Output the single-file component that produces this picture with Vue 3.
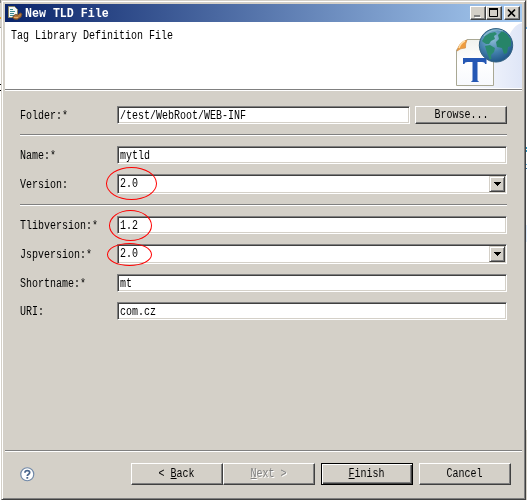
<script setup>
const groups = [
  [{ label: 'Folder:*', value: '/test/WebRoot/WEB-INF', browse: true }],
  [{ label: 'Name:*', value: 'mytld' }, { label: 'Version:', value: '2.0', combo: true, mark: 'm1' }],
  [
    { label: 'Tlibversion:*', value: '1.2', mark: 'm2' },
    { label: 'Jspversion:*', value: '2.0', combo: true, mark: 'm3' },
    { label: 'Shortname:*', value: 'mt' },
    { label: 'URI:', value: 'com.cz' },
  ],
]
</script>

<template>
  <div class="screen">
    <main class="window">
      <header class="title">
        <svg class="ticon" width="16" height="16" viewBox="0 0 16 16">
          <path d="M.5 1.500h6l3 3v8h-9z" fill="#f4f7f7" stroke="#8d8864" />
          <path d="M2 4.500h3M2 6.500h5M2 8.500h4M2 10.500h4" stroke="#3b8a90" />
          <path d="M4.500 12q3-4 5-2l3-2 1.500 1-1 3-4 2.500-3-.5z" fill="#b87639" stroke="#6a4a2f" />
          <path d="M6 12.500h4" stroke="#e3ad68" />
        </svg>
        <span class="t heading">New TLD File</span>
        <span class="controls">
          <span class="cbtn"><svg width="14" height="12"><path d="M4 9h6" stroke="#808080" stroke-width="2" /><path d="M5 10.500h6" stroke="#fff" /></svg></span>
          <span class="cbtn"><svg width="14" height="12"><path d="M3.500 2v7.500h8V2" fill="none" stroke="#000" /><path d="M3 2h9" stroke="#000" stroke-width="2" /></svg></span>
          <span class="cbtn close"><svg width="14" height="12"><path d="M4 2.500l7 7m0-7l-7 7" stroke="#000" stroke-width="1.700" /></svg></span>
        </span>
      </header>
      <section class="banner">
        <span class="t">Tag Library Definition File</span>
        <svg class="art" width="75" height="66" viewBox="0 0 75 66">
          <defs>
            <linearGradient id="wash" x1="0" y1="0" x2="1" y2="0"><stop stop-color="#fff" /><stop offset="1" stop-color="#dfe6f7" /></linearGradient>
            <linearGradient id="paper" x1="0" y1="0" x2="0" y2="1"><stop stop-color="#f1f2ee" /><stop offset=".5" stop-color="#fff" /><stop offset="1" stop-color="#f7f9fd" /></linearGradient>
            <radialGradient id="sea" cx=".4" cy=".3" r=".7"><stop stop-color="#91bfd8" /><stop offset=".6" stop-color="#427fac" /><stop offset="1" stop-color="#225889" /></radialGradient>
          </defs>
          <path d="M75 1C58 5 62 32 40 45L8 66h67z" fill="url(#wash)" />
          <path d="M9.500 28L20 17.500h26.500v46h-37z" fill="url(#paper)" stroke="#a9a894" />
          <path d="M10 29q2-9 10-11q-2 4-1.500 8q-5 0-8.500 3z" fill="#ef9c3e" stroke="#d08c45" stroke-width=".7" />
          <path d="M12 26q1.500-5 6-7" fill="none" stroke="#ffdca5" stroke-width="1.500" />
          <path d="M16 36h23.500v6h-1.500q0-2-3-2h-4.500v18q0 1.500 1.500 1.500v.5h-8v-.5q1.500 0 1.500-1.500V40H20.500q-3 0-3 2H16z" fill="#2457b4" />
          <circle cx="49" cy="23.300" r="16.700" fill="url(#sea)" stroke="#315f80" />
          <path d="M35 19l3-5 5-3 5-1 2 2-3 2 1 3-4 2-2 3h-3l-3-2z" fill="#2b8b70" />
          <path d="M38 24l5-1 5 3-1 4-3 3 .5 4-2 .5-2.500-7z" fill="#2b8b70" />
          <path d="M51 13l4-4 5 3 4 6v6l-3 1-1 6-3 1-2-6-5-1-1-5 3-3z" fill="#268468" />
          <path d="M37 14q8-9 19-5" stroke="#b8e0e0" fill="none" opacity=".6" />
        </svg>
      </section>
      <section class="form">
        <div v-for="(g, i) in groups" :key="i" class="group">
          <div v-for="f in g" :key="f.label" class="row">
            <label><span class="t">{{ f.label }}</span></label>
            <div class="field" :class="{ combo: f.combo }">
              <span class="t">{{ f.value }}</span>
              <i v-if="f.combo" class="drop"><svg width="7" height="4"><path d="M0 0h7v1H6v1H5v1H4v1H3V3H2V2H1V1H0z" /></svg></i>
              <i v-if="f.mark" class="mark" :class="f.mark"></i>
            </div>
            <button v-if="f.browse" class="btn browse"><span class="t">Browse...</span></button>
          </div>
        </div>
      </section>
      <footer>
        <svg class="help" width="15" height="15" viewBox="0 0 15 15"><circle cx="7.250" cy="7.250" r="6.500" fill="#fff" stroke="#7189a8" stroke-width="1.200" /><path d="M4.900 5.800Q5 3.700 7.300 3.700Q9.700 3.700 9.700 5.600Q9.700 6.700 8.300 7.400Q7.300 8 7.300 9" fill="none" stroke="#49658c" stroke-width="1.700" /><path d="M6.400 10h1.800v1.700H6.400z" fill="#49658c" /></svg>
        <button class="btn"><span class="t">&lt; <u>B</u>ack</span></button>
        <button class="btn off"><span class="t"><u>N</u>ext &gt;</span></button>
        <button class="btn primary"><span class="t"><u>F</u>inish</span></button>
        <button class="btn"><span class="t">Cancel</span></button>
      </footer>
    </main>
  </div>
</template>

<style>
body { margin: 0; overflow: hidden; }
</style>
<style scoped>
* { box-sizing: border-box; }
.screen {
  width: 527px; height: 500px; padding-left: 1px;
  background:
    linear-gradient(#888 0 3px, #d4d0c8 3px 17px, #e0a030 17px 19px, #d4d0c8 19px 27px, #888 27px 28px, #fff 28px 84px, #000 84px 85px, #fff 85px 90px, #000 90px 91px, #fff 91px) left / 1px 100% no-repeat,
    linear-gradient(#d4d0c8 0 27px, #62a8e0 27px 29px, #fff 29px 147px, #2d91bd 147px 149px, #fff 149px 150px, #2d91bd 150px 152px, #fff 152px 164px, #63b6df 164px 165px, #fff 165px 168px, #2d79b0 168px 169px, #fff 169px 225px, #e1efff 225px 242px, #fff 242px 430px, #d4d0c8 430px) right / 1px 100% no-repeat;
}
.window { width: 525px; height: 500px; padding: 3px; background: #d4d0c8; border: 1px solid; border-color: #d4d0c8 #404040 #404040 #d4d0c8; box-shadow: inset 1px 1px #fff, inset -1px -1px #808080; display: flex; flex-direction: column; }
.t { display: inline-block; font: 12px/14px "Liberation Mono", monospace; white-space: pre; transform: scaleX(.8333); transform-origin: left center; }
.title { height: 18px; background: linear-gradient(90deg, #0a246a, #a6caf0); display: flex; align-items: center; color: #fff; padding: 0 2px 0 3px; flex: none; }
.heading { font-weight: bold; transform: scaleX(.968); padding-top: 1px; }
.ticon { margin-right: 1px; }
.controls { margin-left: auto; display: flex; }
.cbtn { width: 16px; height: 14px; background: #d4d0c8; border: 1px solid; border-color: #fff #404040 #404040 #fff; box-shadow: inset -1px -1px #808080; display: flex; }
.cbtn svg { flex: none; margin-left: -1px; }
.close { margin-left: 2px; }
.banner { height: 67px; flex: none; background: #fff; display: flex; justify-content: space-between; padding: 7px 0 0 6px; }
.art { margin-top: -7px; }
.form { height: 361px; flex: none; border-top: 1px solid #808080; box-shadow: inset 0 1px #fff; padding: 16px 15px 0; }
.group + .group { border-top: 1px solid #808080; box-shadow: inset 0 1px #fff; margin-top: 10px; padding-top: 11px; }
.row { display: flex; align-items: center; }
.row + .row { margin-top: 10px; }
label { width: 97px; flex: none; height: 16px; padding-top: 2px; display: flex; }
.field { position: relative; height: 18px; flex: 1; min-width: 0; background: #fff; border: 1px solid; border-color: #808080 #fff #fff #808080; box-shadow: inset 1px 1px #404040, inset -1px -1px #d4d0c8; padding: 2px 0 0 2px; display: flex; }
.combo { height: 20px; }
.drop { position: absolute; right: 1px; top: 1px; width: 16px; height: 16px; background: #d4d0c8; border: 1px solid; border-color: #d4d0c8 #404040 #404040 #d4d0c8; box-shadow: inset 1px 1px #fff, inset -1px -1px #808080; display: grid; place-items: center; }
.mark { position: absolute; border: 1px solid #f00; border-radius: 50%; }
.m1 { left: -12px; top: -8px; width: 51px; height: 33px; }
.m2 { left: -9px; top: -7px; width: 43px; height: 31px; }
.m3 { left: -11px; top: -2px; width: 45px; height: 23px; }
.btn { height: 22px; width: 92px; padding: 0; margin: 0; background: #d4d0c8; border: 1px solid; border-color: #fff #404040 #404040 #fff; border-radius: 0; box-shadow: inset -1px -1px #808080; display: flex; justify-content: center; align-items: center; flex: none; color: #000; }
.btn .t { transform-origin: center; }
.browse { height: 18px; margin-left: 5px; }
footer { flex: 1; border-top: 1px solid #808080; box-shadow: inset 0 1px #fff; padding: 12px 11px 0 15px; display: flex; }
.help { margin: 4px auto 0 0; }
.off { color: #808080; text-shadow: 1px 1px #fff; }
.primary { margin: 0 6px; border-color: #000; box-shadow: inset 1px 1px #fff, inset -1px -1px #404040, inset -2px -2px #808080; }
</style>
